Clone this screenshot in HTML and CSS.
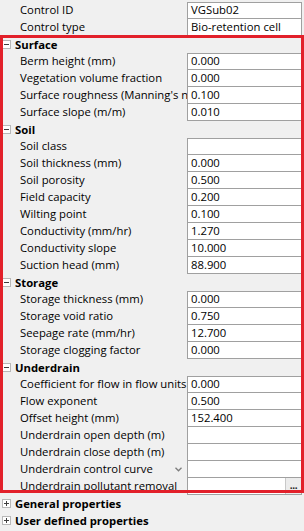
FILE: index.html
```html
<!DOCTYPE html>
<html>
<head>
<meta charset="utf-8">
<link rel="stylesheet" href="styles.css">
</head>
<body>
<div class="grid">
  <div class="row"><div class="label">Control ID</div><div class="val first">VGSub02</div></div>
  <div class="row"><div class="label">Control type</div><div class="val">Bio-retention cell</div></div>

  <div class="row head"><span class="tog minus"></span><span class="htext">Surface</span></div>
  <div class="row"><div class="label">Berm height (mm)</div><div class="val first">0.000</div></div>
  <div class="row"><div class="label">Vegetation volume fraction</div><div class="val">0.000</div></div>
  <div class="row"><div class="label">Surface roughness (Manning's n)</div><div class="val">0.100</div></div>
  <div class="row"><div class="label">Surface slope (m/m)</div><div class="val">0.010</div></div>

  <div class="row head"><span class="tog minus"></span><span class="htext">Soil</span></div>
  <div class="row"><div class="label">Soil class</div><div class="val first"></div></div>
  <div class="row"><div class="label">Soil thickness (mm)</div><div class="val">0.000</div></div>
  <div class="row"><div class="label">Soil porosity</div><div class="val">0.500</div></div>
  <div class="row"><div class="label">Field capacity</div><div class="val">0.200</div></div>
  <div class="row"><div class="label">Wilting point</div><div class="val">0.100</div></div>
  <div class="row"><div class="label">Conductivity (mm/hr)</div><div class="val">1.270</div></div>
  <div class="row"><div class="label">Conductivity slope</div><div class="val">10.000</div></div>
  <div class="row"><div class="label">Suction head (mm)</div><div class="val">88.900</div></div>

  <div class="row head"><span class="tog minus"></span><span class="htext">Storage</span></div>
  <div class="row"><div class="label">Storage thickness (mm)</div><div class="val first">0.000</div></div>
  <div class="row"><div class="label">Storage void ratio</div><div class="val">0.750</div></div>
  <div class="row"><div class="label">Seepage rate (mm/hr)</div><div class="val">12.700</div></div>
  <div class="row"><div class="label">Storage clogging factor</div><div class="val">0.000</div></div>

  <div class="row head"><span class="tog minus"></span><span class="htext">Underdrain</span></div>
  <div class="row"><div class="label">Coefficient for flow in flow units</div><div class="val first">0.000</div></div>
  <div class="row"><div class="label">Flow exponent</div><div class="val">0.500</div></div>
  <div class="row"><div class="label">Offset height (mm)</div><div class="val">152.400</div></div>
  <div class="row"><div class="label">Underdrain open depth (m)</div><div class="val"></div></div>
  <div class="row"><div class="label">Underdrain close depth (m)</div><div class="val"></div></div>
  <div class="row"><div class="label has-chev">Underdrain control curve<svg class="chev" width="7" height="5" viewBox="0 0 7 5"><path d="M0.5 0.8 L3.5 3.8 L6.5 0.8" fill="none" stroke="#7c7c7c" stroke-width="1.3"/></svg></div><div class="val"></div></div>
  <div class="row"><div class="label">Underdrain pollutant removal</div><div class="val btnval"><span class="vtext"></span><span class="dots">...</span></div></div>

  <div class="row head"><span class="tog plus"></span><span class="htext">General properties</span></div>
  <div class="row head"><span class="tog plus"></span><span class="htext">User defined properties</span></div>
</div>
<div class="redbox"></div>
</body>
</html>
```

FILE: styles.css
```css
html, body {
  margin: 0;
  padding: 0;
  background: #f0f0f0;
}
body {
  font-family: "Open Sans", "Noto Sans", "DejaVu Sans", sans-serif;
  font-size: 11.3px;
  color: #000;
  width: 304px;
  height: 531px;
  overflow: hidden;
  position: relative;
}
.grid {
  padding-top: 2px;
  display: flex;
  flex-direction: column;
}
.row {
  display: flex;
  height: 17px;
  align-items: stretch;
}
.label {
  width: 187px;
  box-sizing: border-box;
  padding-left: 20px;
  white-space: nowrap;
  overflow: hidden;
  line-height: 16px;
  flex: none;
}
.has-chev {
  position: relative;
}
.chev {
  position: absolute;
  left: 175px;
  top: 6px;
}
.val {
  width: 115px;
  box-sizing: border-box;
  background: #fff;
  border-left: 1px solid #a0a0a0;
  border-right: 1px solid #a0a0a0;
  border-bottom: 1px solid #a0a0a0;
  padding-left: 3px;
  line-height: 15px;
  white-space: nowrap;
  overflow: hidden;
  flex: none;
}
.val.first {
  border-top: 1px solid #a0a0a0;
  line-height: 14px;
}
.btnval {
  display: flex;
  padding-left: 0;
}
.vtext {
  flex: 1;
}
.dots {
  width: 16px;
  background: #ececec;
  border-left: 1px solid #c8c8c8;
  font-size: 10px;
  line-height: 8px;
  display: flex;
  align-items: flex-end;
  justify-content: center;
  padding-bottom: 5px;
  box-sizing: border-box;
  letter-spacing: -0.3px;
  font-weight: bold;
  color: #222;
}
.head {
  align-items: center;
}
.tog {
  width: 9px;
  height: 9px;
  box-sizing: border-box;
  border: 1px solid #b8b8b8;
  margin-left: 2px;
  margin-right: 4px;
  position: relative;
  background: #fff;
  flex: none;
}
.tog::before {
  content: "";
  position: absolute;
  left: 1px;
  top: 3px;
  width: 5px;
  height: 1px;
  background: #404040;
}
.tog.plus::after {
  content: "";
  position: absolute;
  left: 3px;
  top: 1px;
  width: 1px;
  height: 5px;
  background: #404040;
}
.htext {
  font-weight: bold;
  line-height: 16px;
}
.redbox {
  position: absolute;
  left: 0;
  top: 35px;
  width: 304px;
  height: 458px;
  box-sizing: border-box;
  border: 3px solid #e2202a;
  pointer-events: none;
}
```
